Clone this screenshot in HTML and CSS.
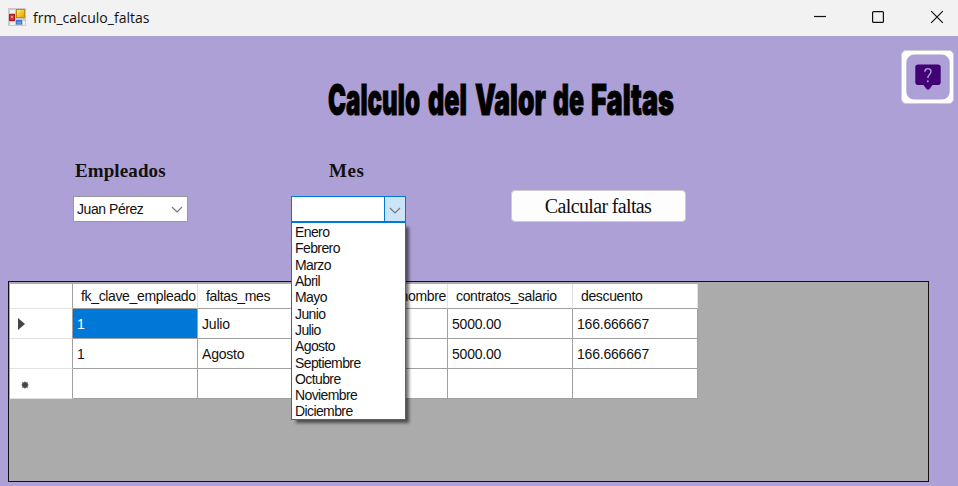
FILE: index.html
```html
<!DOCTYPE html>
<html lang="es">
<head>
<meta charset="utf-8">
<title>frm_calculo_faltas</title>
<link rel="stylesheet" href="styles.css">
</head>
<body>
<div class="window">
  <header class="titlebar">
    <svg class="app-icon" width="18" height="18" viewBox="0 0 18 18">
      <defs>
        <linearGradient id="gold" x1="0" y1="0" x2="1" y2="1"><stop offset="0" stop-color="#fff0a0"/><stop offset=".5" stop-color="#f9c92c"/><stop offset="1" stop-color="#dda000"/></linearGradient>
        <linearGradient id="blue" x1="0" y1="0" x2="0" y2="1"><stop offset="0" stop-color="#3c78d8"/><stop offset="1" stop-color="#86b4f5"/></linearGradient>
      </defs>
      <rect width="18" height="18" rx="1" fill="#c9c9c9"/>
      <path d="M2 2h5v3H2zM2 14h5v3H2zM15 13h2v4h-2z" fill="#f3f3f3"/>
      <rect x="1.5" y="6.5" width="5" height="6" fill="#cf352c" stroke="#a8201c"/>
      <rect x="3" y="8" width="2" height="2" fill="#ee9087"/>
      <rect x="8.500" y="1.500" width="8" height="8" fill="url(#gold)" stroke="#c18a0a"/>
      <rect x="8.500" y="12.500" width="5" height="3.500" fill="url(#blue)" stroke="#3976d0"/>
    </svg>
    <span class="caption">frm_calculo_faltas</span>
    <svg class="controls" width="130" height="14" viewBox="0 0 130 14" fill="none" stroke="#111" stroke-width="1.2">
      <path d="M0 6.500h12"/>
      <rect x="58.600" y="1.600" width="10.800" height="10.800" rx="1"/>
      <path d="M117.200 1.200l11.600 11.600M128.800 1.200l-11.600 11.600"/>
    </svg>
  </header>
  <main class="form">
    <div class="heading">
      <svg class="title" width="370" height="50" viewBox="0 0 370 50">
        <g>
          <text x="1" y="39.500" textLength="92" lengthAdjust="spacingAndGlyphs">Calculo</text>
          <text x="101" y="39.500" textLength="39" lengthAdjust="spacingAndGlyphs">del</text>
          <text x="148" y="39.500" textLength="71" lengthAdjust="spacingAndGlyphs">Valor</text>
          <text x="226" y="39.500" textLength="31" lengthAdjust="spacingAndGlyphs">de</text>
          <text x="264" y="39.500" textLength="83" lengthAdjust="spacingAndGlyphs">Faltas</text>
        </g>
      </svg>
      <button class="help" aria-label="Ayuda">
        <svg width="44" height="46" viewBox="0 0 44 46">
          <rect x="0.300" y="0.600" width="43.400" height="45" rx="8" fill="#ada0d6"/>
          <path d="M12 10.500h20q2.700 0 2.700 2.700v15q0 2.700-2.700 2.700h-5.500l-3 4.200q-1.500 1.500-3 0l-3-4.200h-5.500q-2.700 0-2.700-2.700v-15q0-2.700 2.700-2.700z" fill="#420075"/>
          <path d="M18.800 17.800c0-4.200 6.200-4.200 6.200-.2 0 3-3.200 3-3.200 6.400" fill="none" stroke="#ada0d6" stroke-width="1.400"/>
          <circle cx="21.800" cy="27.200" r="1" fill="#ada0d6"/>
        </svg>
      </button>
    </div>
    <div class="fields">
      <div class="field employees">
        <label>Empleados</label>
        <div class="combo"><span>Juan Pérez</span>
          <svg width="12" height="7" viewBox="0 0 12 7"><path d="M1 1l5 5 5-5"/></svg>
        </div>
      </div>
      <div class="field month">
        <label>Mes</label>
        <div class="combo open"><span></span>
          <i class="drop"><svg width="12" height="7" viewBox="0 0 12 7"><path d="M1 1l5 5 5-5"/></svg></i>
          <ul class="menu">
            <li>Enero</li><li>Febrero</li><li>Marzo</li><li>Abril</li><li>Mayo</li><li>Junio</li><li>Julio</li><li>Agosto</li><li>Septiembre</li><li>Octubre</li><li>Noviembre</li><li>Diciembre</li>
          </ul>
        </div>
      </div>
      <button class="calc">Calcular faltas</button>
    </div>
    <section class="grid">
      <div class="table">
        <div class="row head"><div></div><div>fk_clave_empleado</div><div>faltas_mes</div><div class="end">empleados_nombre</div><div>contratos_salario</div><div>descuento</div></div>
        <div class="row"><div><svg width="7" height="12" viewBox="0 0 7 12"><path d="M0 0l7 6-7 6z" fill="#444"/></svg></div><div class="selected">1</div><div>Julio</div><div></div><div>5000.00</div><div>166.666667</div></div>
        <div class="row"><div></div><div>1</div><div>Agosto</div><div></div><div>5000.00</div><div>166.666667</div></div>
        <div class="row"><div><svg class="new" width="8" height="8" viewBox="0 0 8 8"><path d="M4 .5v7M.5 4h7M1.300 1.300l5.400 5.400M6.700 1.300L1.300 6.700" stroke="#555" stroke-width="1.200"/><circle cx="4" cy="4" r="2.800" fill="#444"/></svg></div><div></div><div></div><div></div><div></div><div></div></div>
      </div>
    </section>
  </main>
</div>
</body>
</html>
```

FILE: styles.css
```css
* { box-sizing: border-box; }
body { margin: 0; font-family: "Liberation Sans", sans-serif; font-size: 14px; color: #111; }
button { padding: 0; margin: 0; }
.window { width: 958px; height: 486px; overflow: hidden; background: #ada0d6; }
.titlebar { display: flex; align-items: center; height: 36px; padding: 0 14px 2px 8px; background: #f2f2f2; }
.app-icon { margin-top: -1px; }
.caption { flex: 1; margin-left: 7px; font-family: "Open Sans", sans-serif; font-size: 14px; letter-spacing: 0; }
.form { display: flex; flex-direction: column; height: 450px; padding: 14px 4px 0 8px; }
.heading { display: flex; justify-content: space-between; height: 110px; padding-left: 319px; }
.title { margin-top: 25px; overflow: visible; }
.title text { font: 900 43px Inter, sans-serif; fill: #000; stroke: #000; stroke-width: 1px; }
.help { display: flex; align-items: center; justify-content: center; width: 53px; height: 54px; background: #fdfdfd; border: 1px solid #ccc; border-radius: 5px; }
.fields { display: flex; height: 121px; padding-left: 65px; }
.field label { display: block; margin-bottom: 14px; font: bold 19px/22px "Liberation Serif", serif; letter-spacing: 0.1px; }
.employees { width: 218px; }
.employees label { padding-left: 2px; }
.month { width: 220px; }
.month label { padding-left: 38px; letter-spacing: 0.6px; }
.combo { position: relative; display: flex; align-items: center; justify-content: space-between; width: 115px; height: 26px; padding: 0 4px 1px 3px; background: #fff; border: 1px solid #999; letter-spacing: -0.45px; }
.combo svg { margin-top: 2px; fill: none; stroke: #777; stroke-width: 1.2; }
.combo.open { border-color: #0078d7; padding: 0; }
.drop { display: flex; align-items: center; justify-content: center; width: 21px; height: 24px; background: #cce4f7; border-left: 1px solid #0078d7; }
.menu { position: absolute; z-index: 2; top: 25px; left: -1px; width: 115px; height: 198px; margin: 0; padding: 1px 0 0 3px; list-style: none; background: #fff; border: 1px solid #0078d7; box-shadow: 4px 4px 3px -1px rgba(0, 0, 0, 0.55); line-height: 16.32px; letter-spacing: -0.6px; }
.calc { width: 175px; height: 32px; margin-top: 30px; padding-right: 1px; background: #fdfdfd; border: 1px solid #ccc; border-radius: 4px; font: 20px "Liberation Serif", serif; letter-spacing: -0.65px; color: #111; }
.grid { width: 921px; height: 201px; border: 1.5px solid #111; background: #ababab; padding: 1px; }
.table { width: 688px; margin-top: 1px; }
.row { display: grid; grid-template-columns: 63px repeat(5, 125px); height: 30px; }
.row > div { display: flex; align-items: center; overflow: hidden; padding-left: 4px; border-right: 1px solid #a0a0a0; border-bottom: 1px solid #a0a0a0; background: #fff; letter-spacing: -0.2px; white-space: nowrap; }
.row > div:first-child { padding-left: 8px; border-bottom-color: #e2e2e2; }
.row.head { height: 25px; }
.row.head > div { padding-left: 8px; border-right-color: #e2e2e2; letter-spacing: -0.35px; }
.row.head > div:first-child { border-right-color: #a0a0a0; }
.row.head > .end { justify-content: flex-end; padding-right: 1px; }
.row > .selected { background: #0078d7; color: #fff; }
.new { margin: 3px 0 0 3px; }
```
